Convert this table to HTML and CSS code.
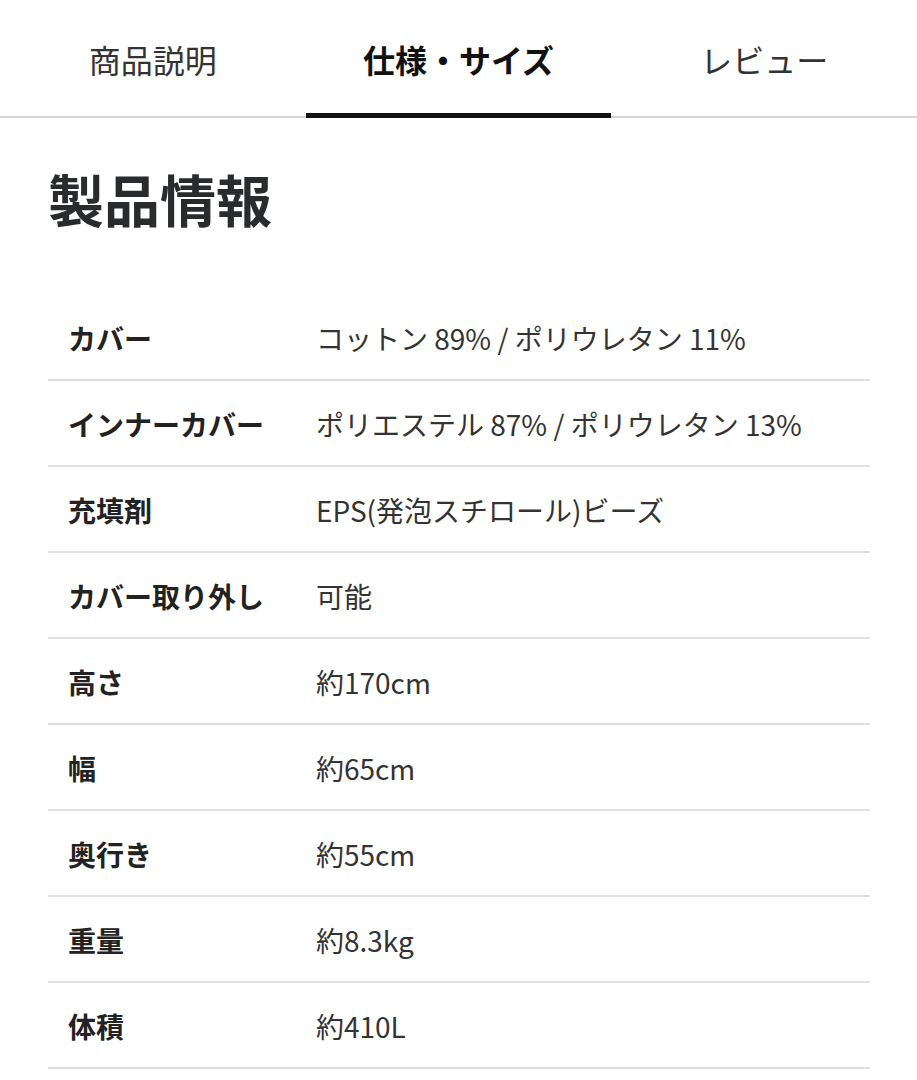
FILE: index.html
```html
<!DOCTYPE html>
<html lang="ja">
<head>
<meta charset="utf-8">
<link rel="stylesheet" href="styles.css">
</head>
<body>
<nav class="tabs">
  <div class="tab">商品説明</div>
  <div class="tab active">仕様・サイズ</div>
  <div class="tab">レビュー</div>
</nav>
<main class="content">
  <h1 class="title">製品情報</h1>
  <div class="spec">
    <div class="row"><div class="label">カバー</div><div class="value">コットン 89% / ポリウレタン 11%</div></div>
    <div class="row"><div class="label">インナーカバー</div><div class="value">ポリエステル 87% / ポリウレタン 13%</div></div>
    <div class="row"><div class="label">充填剤</div><div class="value">EPS(発泡スチロール)ビーズ</div></div>
    <div class="row"><div class="label">カバー取り外し</div><div class="value">可能</div></div>
    <div class="row"><div class="label">高さ</div><div class="value">約170cm</div></div>
    <div class="row"><div class="label">幅</div><div class="value">約65cm</div></div>
    <div class="row"><div class="label">奥行き</div><div class="value">約55cm</div></div>
    <div class="row"><div class="label">重量</div><div class="value">約8.3kg</div></div>
    <div class="row"><div class="label">体積</div><div class="value">約410L</div></div>
  </div>
</main>
</body>
</html>
```

FILE: styles.css
```css
* { box-sizing: border-box; }
html, body { margin: 0; padding: 0; background: #fff; }
body {
  font-family: "Noto Sans CJK JP", "Noto Sans", sans-serif;
  color: #2b2b2b;
}
.tabs {
  display: grid;
  grid-template-columns: 1fr 1fr 1fr;
  height: 118px;
  border-bottom: 2px solid #d4d4d4;
}
.tab {
  display: flex;
  align-items: center;
  justify-content: center;
  font-size: 32px;
  color: #333;
  padding-top: 4px;
  border-bottom: 5px solid transparent;
  margin-bottom: -2px;
}
.tab.active {
  font-weight: 700;
  color: #111;
  border-bottom-color: #111;
}
.content {
  padding: 0 47px 0 48px;
}
.title {
  margin: 0;
  height: 177px;
  display: flex;
  align-items: center;
  font-size: 56px;
  font-weight: 700;
  color: #2a2b2c;
  padding-bottom: 18px;
}
.row {
  display: flex;
  align-items: center;
  height: 86px;
  border-bottom: 2px solid #e0e0e0;
  padding-top: 2px;
}
.label {
  width: 268px;
  padding-left: 20px;
  font-size: 28px;
  font-weight: 700;
  color: #222;
}
.value {
  font-size: 28px;
  color: #333;
}
```
